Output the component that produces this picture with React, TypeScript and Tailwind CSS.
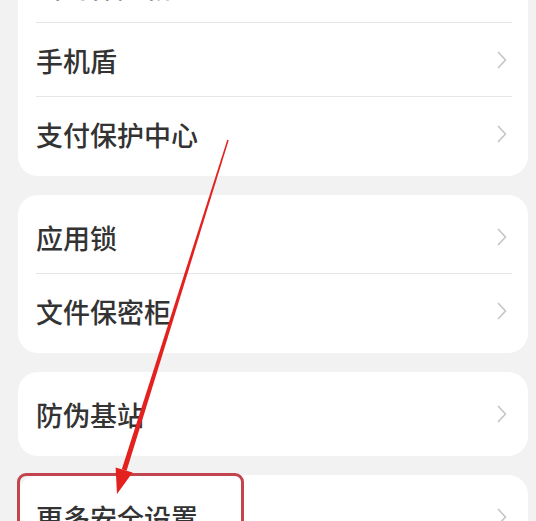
import React from "react";

const Chevron = () => (
  <svg width="12" height="20" viewBox="0 0 12 20" fill="none">
    <path d="M2.5 2.5 L9.5 10 L2.5 17.5" stroke="#c6c6c6" strokeWidth="1.7" strokeLinecap="round" strokeLinejoin="round" />
  </svg>
);

const Row = ({ label, divider }: { label: string; divider?: boolean }) => (
  <div className="relative flex h-[74px] items-center justify-between pl-[18px] pr-[20px]">
    <span className="text-[27px] font-medium leading-none text-[#333333]" style={{ fontFamily: '"Noto Sans CJK SC", "Noto Sans", sans-serif' }}>
      {label}
    </span>
    <Chevron />
    {divider && <div className="absolute bottom-0 left-[18px] right-[16px] h-px bg-[#e6e6e6]" />}
  </div>
);

const Card = ({ items, className = "" }: { items: string[]; className?: string }) => (
  <div className={"rounded-[20px] bg-white py-[5px] " + className}>
    {items.map((t, i) => (
      <Row key={t} label={t} divider={i < items.length - 1} />
    ))}
  </div>
);

export default function App() {
  return (
    <div className="relative h-[521px] w-[536px] overflow-hidden bg-[#f2f2f2]">
      <div className="flex flex-col gap-[19px] pl-[18px] pr-[8px] mt-[-56px]">
        <Card items={["密码保险箱", "手机盾", "支付保护中心"]} />
        <Card items={["应用锁", "文件保密柜"]} />
        <Card items={["防伪基站"]} />
        <Card items={["更多安全设置"]} />
      </div>
      <div className="absolute left-[17px] top-[473px] h-[80px] w-[227px] rounded-[9px] border-[3px] border-[#c2454e]" />
      <svg className="absolute left-0 top-0" width="536" height="521" viewBox="0 0 536 521">
        <polygon points="228.7,140.2 227.3,139.8 121.8,469.3 126.6,470.7" fill="#e3211e" />
        <polygon points="132.6,472.6 115.6,467.4 117,494" fill="#e3211e" />
      </svg>
    </div>
  );
}
